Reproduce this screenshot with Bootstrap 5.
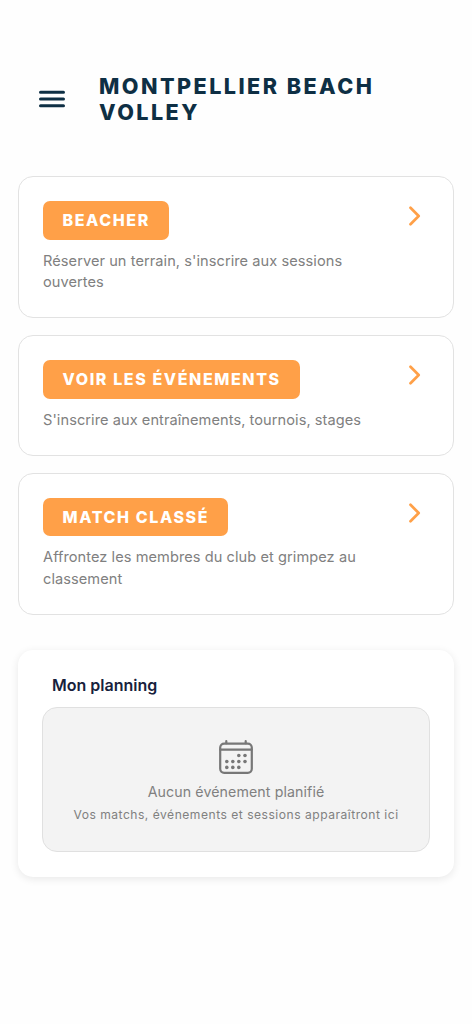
<!DOCTYPE html>
<html lang="fr">
<head>
<meta charset="utf-8">
<meta name="viewport" content="width=device-width, initial-scale=1">
<title>Montpellier Beach Volley</title>
<link href="https://cdn.jsdelivr.net/npm/bootstrap@5.3.0/dist/css/bootstrap.min.css" rel="stylesheet">
<style>
  body { background: #fefefe; font-family: Inter, "Liberation Sans", sans-serif; color: #808080; min-height: 1024px; }
  .app-header { padding: 73px 70px 0 39px; height: 176px; }
  .menu-btn { width: 26px; height: 52px; margin-right: 34px; color: #0e2f44; }
  .app-title { font-size: 21.6px; line-height: 26px; font-weight: 800; letter-spacing: 2.45px; color: #0e2f44; }
  .app-main { padding: 0 18px; }
  .tiles { gap: 17px; }
  .tile { border: 1.3px solid #e2e2e2; border-radius: 15px; background: #fff; padding: 24px 24px 0; }
  .tile-tall { height: 142px; }
  .tile-short { height: 120.5px; }
  .tile-label { height: 38.5px; line-height: 38.5px; padding: 0 18.8px 0 19.5px; border-radius: 7px; background: #ffa048; color: #fff; font-size: 16px; font-weight: 800; letter-spacing: 1.6px; }
  .tile-text { font-size: 14.6px; line-height: 21.8px; letter-spacing: .06px; margin-top: 11px; max-width: 340px; }
  .chevron { margin: 5px 7.5px 0 0; color: #ffa048; }
  .planning { margin-top: 35px; height: 227px; border-radius: 15px; background: #fff; box-shadow: 0 2px 9px rgba(0,0,0,.09); padding: 23px 24px; }
  .planning-title { font-size: 16px; line-height: 24px; font-weight: 600; letter-spacing: 0; color: #17213c; padding-left: 10px; margin-bottom: 10px; }
  .empty { height: 145.5px; border: 1.3px solid #e0e0e0; border-radius: 15px; background: #f3f3f3; padding-top: 32px; }
  .empty-main { font-size: 14.2px; line-height: 22px; letter-spacing: .1px; margin-top: 7px; }
  .empty-sub { font-size: 12.1px; line-height: 18px; letter-spacing: .5px; margin-top: 3px; }
</style>
</head>
<body>
<header class="app-header d-flex align-items-start">
  <button class="menu-btn btn border-0 p-0 d-flex align-items-center flex-shrink-0" type="button" aria-label="Menu">
    <svg width="26" height="20" viewBox="0 0 26 20" fill="none" stroke="currentColor" stroke-width="3" stroke-linecap="round"><path d="M1.5 3.2h23M1.5 10h23M1.5 16.8h23"/></svg>
  </button>
  <h1 class="app-title mb-0">MONTPELLIER BEACH VOLLEY</h1>
</header>
<main class="app-main">
  <div class="tiles d-flex flex-column">
    <a class="tile tile-tall d-flex justify-content-between align-items-start text-reset text-decoration-none" href="#">
      <div><span class="tile-label d-inline-block align-top">BEACHER</span><p class="tile-text mb-0">Réserver un terrain, s'inscrire aux sessions ouvertes</p></div>
      <svg class="chevron flex-shrink-0" width="14" height="20" viewBox="0 0 14 20" fill="none" stroke="currentColor" stroke-width="2.7" stroke-linecap="round" stroke-linejoin="round"><path d="M2.5 1.8l8.2 8.2-8.2 8.2"/></svg>
    </a>
    <a class="tile tile-short d-flex justify-content-between align-items-start text-reset text-decoration-none" href="#">
      <div><span class="tile-label d-inline-block align-top">VOIR LES ÉVÉNEMENTS</span><p class="tile-text mb-0">S'inscrire aux entraînements, tournois, stages</p></div>
      <svg class="chevron flex-shrink-0" width="14" height="20" viewBox="0 0 14 20" fill="none" stroke="currentColor" stroke-width="2.7" stroke-linecap="round" stroke-linejoin="round"><path d="M2.5 1.8l8.2 8.2-8.2 8.2"/></svg>
    </a>
    <a class="tile tile-tall d-flex justify-content-between align-items-start text-reset text-decoration-none" href="#">
      <div><span class="tile-label d-inline-block align-top">MATCH CLASSÉ</span><p class="tile-text mb-0">Affrontez les membres du club et grimpez au classement</p></div>
      <svg class="chevron flex-shrink-0" width="14" height="20" viewBox="0 0 14 20" fill="none" stroke="currentColor" stroke-width="2.7" stroke-linecap="round" stroke-linejoin="round"><path d="M2.5 1.8l8.2 8.2-8.2 8.2"/></svg>
    </a>
  </div>
  <section class="planning">
    <h2 class="planning-title">Mon planning</h2>
    <div class="empty d-flex flex-column align-items-center text-center">
      <svg width="34" height="34" viewBox="0 0 34 34" fill="none" stroke="#777" stroke-width="2.2" stroke-linecap="round"><rect x="1.2" y="3.6" width="31.6" height="29.2" rx="4"/><path d="M1.2 9.6h31.6M7.3 1.2v2M26.7 1.2v2"/><g fill="#777" stroke="none"><circle cx="19.8" cy="15.5" r="1.8"/><circle cx="26" cy="15.5" r="1.8"/><circle cx="7.8" cy="21.5" r="1.8"/><circle cx="13.8" cy="21.5" r="1.8"/><circle cx="19.8" cy="21.5" r="1.8"/><circle cx="26" cy="21.5" r="1.8"/><circle cx="7.8" cy="27.4" r="1.8"/><circle cx="13.8" cy="27.4" r="1.8"/><circle cx="19.8" cy="27.4" r="1.8"/></g></svg>
      <div class="empty-main">Aucun événement planifié</div>
      <div class="empty-sub">Vos matchs, événements et sessions apparaîtront ici</div>
    </div>
  </section>
</main>
<script src="https://cdn.jsdelivr.net/npm/bootstrap@5.3.0/dist/js/bootstrap.bundle.min.js"></script>
</body>
</html>
